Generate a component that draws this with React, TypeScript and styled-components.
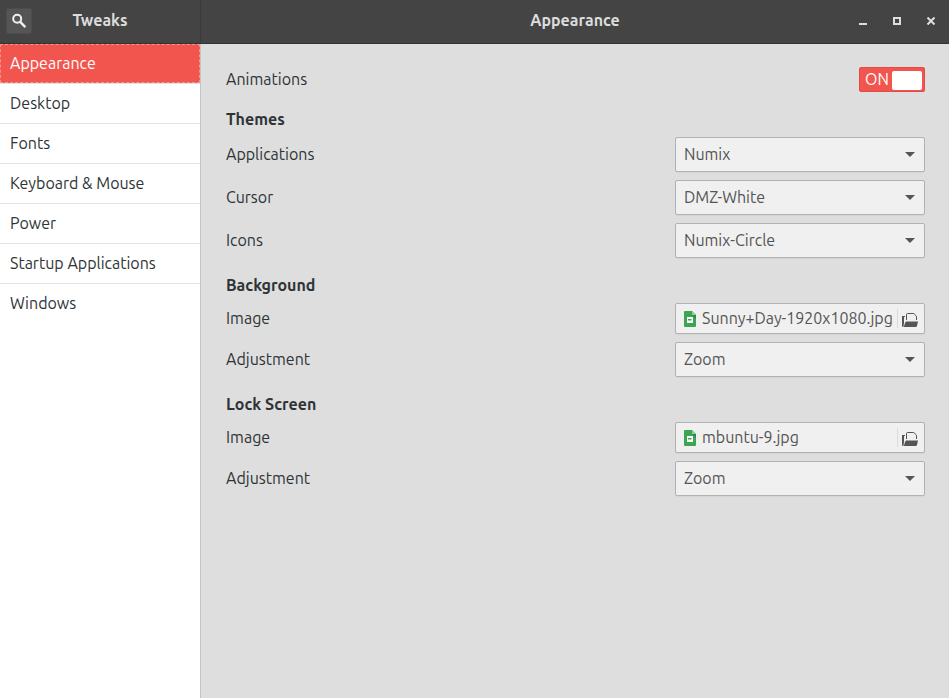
import React, { useId, useState } from "react";
import styled, { createGlobalStyle } from "styled-components";

const GlobalStyle = createGlobalStyle`
  *, *::before, *::after { box-sizing: border-box; }
  html, body { height: 100%; margin: 0; }
  #root { height: 100%; }
  body {
    background: #dedede;
    color: #2e3436;
    font-family: Ubuntu, "Noto Sans", sans-serif;
    font-size: 16px;
    line-height: 22px;
  }
  button, input, select { font: inherit; color: inherit; margin: 0; }
`;

const Window = styled.div`
  display: grid;
  grid-template-columns: 201px minmax(0, 1fr);
  grid-template-rows: 44px minmax(0, 1fr);
  min-height: 100%;
`;

const Bar = styled.header<{ $divided?: boolean }>`
  display: grid;
  grid-template-columns: ${(p) => (p.$divided ? "26px 1fr 26px" : "88px 1fr 88px")};
  align-items: center;
  padding: 0 ${(p) => (p.$divided ? "6px" : "8px")} 2px;
  color: #dcdcdc;
  background: #444444;
  border-bottom: 1px solid #333333;
  border-right: ${(p) => (p.$divided ? "1px solid #3a3a3a" : "0")};
`;

const Title = styled.h1`
  grid-column: 2;
  margin: 0;
  padding-bottom: 2px;
  font-size: 16px;
  line-height: 22px;
  font-weight: 700;
  text-align: center;
`;

const SearchButton = styled.button`
  display: grid;
  place-items: center;
  width: 26px;
  height: 26px;
  padding: 0;
  color: #f0f0f0;
  background: #555555;
  border: 1px solid #4c4c4c;
  border-radius: 2px;
`;

const WindowButtons = styled.div`
  display: flex;
  justify-content: flex-end;
  gap: 18px;
  padding-right: 2px;
`;

const WindowButton = styled.button`
  display: grid;
  place-items: center;
  width: 16px;
  height: 24px;
  padding: 0;
  color: #dedede;
  background: none;
  border: 0;
`;

const Sidebar = styled.nav`
  background: #ffffff;
  border-right: 1px solid #c4c4c4;
`;

const NavList = styled.ul`
  margin: 0;
  padding: 0;
  list-style: none;
`;

const NavItem = styled.li`
  height: 40px;
  border-bottom: 1px solid #e2e2e2;

  &:last-child { border-bottom-color: transparent; }
`;

const NavLink = styled.a<{ $active: boolean }>`
  display: flex;
  align-items: center;
  height: 100%;
  padding: 0 9px 2px;
  text-decoration: none;
  color: ${(p) => (p.$active ? "#ffffff" : "#2e3436")};
  background: ${(p) => (p.$active ? "#f2544e" : "transparent")};
  border: 1px dashed ${(p) => (p.$active ? "#f59490" : "transparent")};
`;

const Panel = styled.main`
  padding: 23px 24px 24px 25px;
`;

const Group = styled.section`
  display: grid;
  gap: 8px;
`;

const GroupTitle = styled.h2`
  margin: 0;
  padding: 16px 0 7px;
  font-size: 16px;
  line-height: 22px;
  font-weight: 700;
`;

const Row = styled.div`
  display: flex;
  align-items: center;
  justify-content: space-between;
  gap: 16px;
`;

const RowLabel = styled.label`
  padding-bottom: 2px;
`;

const Field = styled.div`
  position: relative;
  width: 250px;
`;

const Select = styled.select`
  display: block;
  appearance: none;
  width: 100%;
  height: 35px;
  padding: 0 32px 2px 8px;
  color: #555555;
  background: #f0f0f0;
  border: 1px solid #b2b2b2;
  border-radius: 2px;
  box-shadow: 0 1px 1px #d4d4d4;
`;

const Arrow = styled.svg`
  position: absolute;
  right: 10px;
  top: 15px;
  pointer-events: none;
`;

const FileButton = styled.button`
  display: flex;
  align-items: center;
  width: 250px;
  height: 31px;
  padding: 0 6px 0 8px;
  color: #555555;
  background: #f0f0f0;
  border: 1px solid #b2b2b2;
  border-radius: 2px;
  box-shadow: 0 1px 1px #d4d4d4;
`;

const FileName = styled.span`
  flex: 1;
  min-width: 0;
  padding: 0 0 2px 6px;
  text-align: left;
  white-space: nowrap;
`;

const FolderBox = styled.span`
  display: flex;
  align-items: center;
  height: 19px;
  padding: 3px 0 0 4px;
  border-left: 1px solid #dcdcdc;
`;

const Switch = styled.label`
  display: grid;
  grid-template-columns: 32px 30px;
  align-items: center;
  width: 66px;
  height: 25px;
  color: #ffffff;
  background: #f2544e;
  border: 1px solid #e04d48;
  border-radius: 2px;
  text-align: center;

  &:has(input:not(:checked)) { background: #a8a8a8; border-color: #999999; }
`;

const SwitchInput = styled.input`
  grid-column: 2;
  grid-row: 1;
  appearance: none;
  width: 30px;
  height: 19px;
  background: #ffffff;
  border-radius: 2px;
`;

const SwitchText = styled.span`
  grid-column: 1;
  grid-row: 1;
  padding: 0 0 2px 2px;
`;

function SearchIcon() {
  return (
    <svg width="16" height="16" viewBox="0 0 16 16" fill="none" stroke="currentColor" strokeWidth="2" aria-hidden="true">
      <circle cx="6.2" cy="5.8" r="4" />
      <path d="M9 8.7 14.3 14.1" strokeWidth="2.4" />
    </svg>
  );
}

function DocumentIcon() {
  return (
    <svg width="12" height="16" viewBox="0 0 12 16" aria-hidden="true">
      <path d="M1 0H8L12 4V15Q12 16 11 16H1Q0 16 0 15V1Q0 0 1 0Z" fill="#3ba551" />
      <path d="M8 0 12 4H8Z" fill="#93cea0" />
      <path d="M8 4H12V8Z" fill="#2f8943" />
      <path d="M3 6H9V12H3ZM4 8V9.5H7.5V8Z" fill="#ffffff" fillRule="evenodd" />
    </svg>
  );
}

function FolderIcon() {
  return (
    <svg width="16" height="14" viewBox="0 0 16 14" aria-hidden="true">
      <path d="M0 3H3V4H2V10L1.4 14H1Q0 14 0 13Z" fill="#555555" />
      <path d="M4.5 7V1.5Q4.5 .5 5.5 .5H11.8L14.5 3.2V7" fill="none" stroke="#555555" />
      <path d="M4 8.4H16L15 13Q14.8 14 13.8 14H1.8L3 10Z" fill="#555555" />
    </svg>
  );
}

function SelectRow({ label, options }: { label: string; options: string[] }) {
  const id = useId();
  return (
    <Row>
      <RowLabel htmlFor={id}>{label}</RowLabel>
      <Field>
        <Select id={id}>
          {options.map((option) => (
            <option key={option}>{option}</option>
          ))}
        </Select>
        <Arrow width="10" height="5" viewBox="0 0 10 5" aria-hidden="true">
          <path d="M0 0H10L5 5Z" fill="#555555" />
        </Arrow>
      </Field>
    </Row>
  );
}

function FileRow({ label, file }: { label: string; file: string }) {
  const id = useId();
  return (
    <Row>
      <RowLabel htmlFor={id}>{label}</RowLabel>
      <FileButton id={id} type="button">
        <DocumentIcon />
        <FileName>{file}</FileName>
        <FolderBox>
          <FolderIcon />
        </FolderBox>
      </FileButton>
    </Row>
  );
}

const pages = ["Appearance", "Desktop", "Fonts", "Keyboard & Mouse", "Power", "Startup Applications", "Windows"];

export default function App() {
  const [animations, setAnimations] = useState(true);
  return (
    <>
      <GlobalStyle />
      <Window>
        <Bar $divided>
          <SearchButton type="button" aria-label="Search">
            <SearchIcon />
          </SearchButton>
          <Title>Tweaks</Title>
        </Bar>
        <Bar>
          <Title>Appearance</Title>
          <WindowButtons>
            <WindowButton type="button" aria-label="Minimize">
              <svg width="8" height="8" viewBox="0 0 8 8" aria-hidden="true">
                <path d="M0 6H8V8H0Z" fill="currentColor" />
              </svg>
            </WindowButton>
            <WindowButton type="button" aria-label="Maximize">
              <svg width="8" height="8" viewBox="0 0 8 8" aria-hidden="true">
                <path d="M1 1H7V7H1Z" fill="none" stroke="currentColor" strokeWidth="2" />
              </svg>
            </WindowButton>
            <WindowButton type="button" aria-label="Close">
              <svg width="8" height="8" viewBox="0 0 8 8" aria-hidden="true">
                <path d="M.5 .5 7.5 7.5M7.5 .5 .5 7.5" fill="none" stroke="currentColor" strokeWidth="2" />
              </svg>
            </WindowButton>
          </WindowButtons>
        </Bar>
        <Sidebar aria-label="Settings">
          <NavList>
            {pages.map((page, index) => (
              <NavItem key={page}>
                <NavLink href="#" $active={index === 0} aria-current={index === 0 ? "page" : undefined}>
                  {page}
                </NavLink>
              </NavItem>
            ))}
          </NavList>
        </Sidebar>
        <Panel>
          <Row>
            <RowLabel htmlFor="animations">Animations</RowLabel>
            <Switch>
              <SwitchInput
                id="animations"
                type="checkbox"
                role="switch"
                checked={animations}
                onChange={(event) => setAnimations(event.target.checked)}
              />
              <SwitchText>{animations ? "ON" : "OFF"}</SwitchText>
            </Switch>
          </Row>
          <GroupTitle>Themes</GroupTitle>
          <Group aria-label="Themes">
            <SelectRow label="Applications" options={["Numix"]} />
            <SelectRow label="Cursor" options={["DMZ-White"]} />
            <SelectRow label="Icons" options={["Numix-Circle"]} />
          </Group>
          <GroupTitle>Background</GroupTitle>
          <Group aria-label="Background">
            <FileRow label="Image" file="Sunny+Day-1920x1080.jpg" />
            <SelectRow label="Adjustment" options={["Zoom"]} />
          </Group>
          <GroupTitle>Lock Screen</GroupTitle>
          <Group aria-label="Lock Screen">
            <FileRow label="Image" file="mbuntu-9.jpg" />
            <SelectRow label="Adjustment" options={["Zoom"]} />
          </Group>
        </Panel>
      </Window>
    </>
  );
}
